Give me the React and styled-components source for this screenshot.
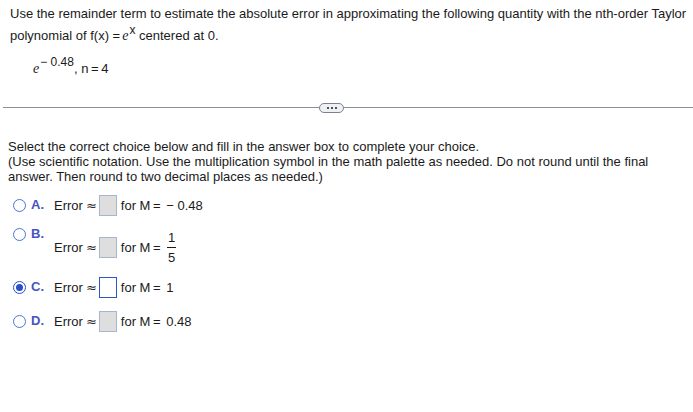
import React from "react";
import styled, { createGlobalStyle } from "styled-components";

const GlobalStyle = createGlobalStyle`
  body {
    margin: 0;
    background: #fff;
    font-family: "Liberation Sans", Arial, sans-serif;
    font-size: 13px;
    color: #1a1a1a;
  }
`;

const Page = styled.div`
  width: 693px;
  padding-top: 3px;
`;

const Question = styled.div`
  padding-left: 10px;
  line-height: 22px;
`;

const MathE = styled.span`
  font-family: "Liberation Serif", "Times New Roman", serif;
  font-style: italic;
  font-size: 14px;
  margin-left: 2px;
`;

const Sup = styled.sup`
  font-size: ${(p) => p.$size || 11}px;
  position: relative;
  top: ${(p) => p.$top || 0}px;
  margin-left: 1px;
  vertical-align: baseline;
  line-height: 0;
`;

const Expression = styled.div`
  margin-top: 11px;
  padding-left: 31px;
  line-height: 22px;
  height: 22px;
`;

const Divider = styled.div`
  display: flex;
  align-items: center;
  margin: 22px 0 0 3px;
  height: 11px;
`;

const Line = styled.div`
  flex: ${(p) => (p.$width ? `0 0 ${p.$width}px` : 1)};
  height: 1px;
  background: #8b919b;
`;

const Pill = styled.div`
  width: 23px;
  height: 8px;
  border: 1px solid #7a8190;
  border-radius: 5px;
  background: #eef0f4;
  display: flex;
  align-items: center;
  justify-content: center;
  gap: 2px;

  span {
    width: 2px;
    height: 2px;
    background: #4a505c;
  }
`;

const Instructions = styled.div`
  margin-top: 26px;
  padding-left: 8px;
  line-height: 15px;
`;

const Choices = styled.div`
  padding-left: 13px;
`;

const Choice = styled.div`
  display: flex;
  align-items: flex-start;
  margin-top: ${(p) => p.$gap}px;
`;

const RadioCell = styled.div`
  display: flex;
  align-items: center;
  height: 21px;
  width: 41px;
`;

const Radio = styled.span`
  width: 11px;
  height: 11px;
  border-radius: 50%;
  border: ${(p) => (p.$checked ? "1.5px solid #2550c8" : "1px solid #4a76d8")};
  display: flex;
  align-items: center;
  justify-content: center;
  box-sizing: content-box;

  &::after {
    content: "";
    width: 7px;
    height: 7px;
    border-radius: 50%;
    background: ${(p) => (p.$checked ? "#2550c8" : "transparent")};
  }
`;

const Letter = styled.span`
  margin-left: 5px;
  font-weight: bold;
  color: #4654be;
  position: relative;
  top: -1px;
`;

const Content = styled.div`
  display: flex;
  align-items: center;
  min-height: 21px;
  padding-top: ${(p) => p.$pad || 0}px;
`;

const Approx = styled.span`
  font-family: "DejaVu Sans", sans-serif;
  font-size: 13px;
  line-height: 15px;
  margin-left: 3px;
  color: #2a2a2a;
`;

const AnswerBox = styled.span`
  display: inline-block;
  width: 16px;
  height: 19px;
  margin: 0 4px 0 2px;
  border: 1px solid ${(p) => (p.$active ? "#2a56c6" : "#a7b6cf")};
  background: ${(p) => (p.$active ? "#fff" : "#dedede")};
`;

const Fraction = styled.span`
  display: inline-flex;
  flex-direction: column;
  align-items: center;
  margin-left: 4px;
  line-height: 15px;

  i {
    width: 9px;
    height: 1px;
    background: #1a1a1a;
    margin: 2px 0;
  }
`;

const Value = styled.span`
  margin-left: 3px;
`;

const choices = [
  { letter: "A", gap: 11, m: "−\u00a00.48" },
  { letter: "B", gap: 8, pad: 6, frac: ["1", "5"] },
  { letter: "C", gap: 12, m: "1", checked: true },
  { letter: "D", gap: 13, m: "0.48" },
];

export default function App() {
  return (
    <Page>
      <GlobalStyle />
      <Question>
        Use the remainder term to estimate the absolute error in approximating the
        following quantity with the nth-order Taylor polynomial of f(x) =
        <MathE>e</MathE>
        <Sup $size={12} $top={-6}>x</Sup> centered at 0.
      </Question>
      <Expression>
        <MathE>e</MathE>
        <Sup $size={12} $top={-7}>− 0.48</Sup>, n{"\u2009"}={"\u2009"}4
      </Expression>
      <Divider>
        <Line $width={316} />
        <Pill>
          <span />
          <span />
          <span />
        </Pill>
        <Line />
      </Divider>
      <Instructions>
        Select the correct choice below and fill in the answer box to complete your choice.
        <br />
        (Use scientific notation. Use the multiplication symbol in the math palette as
        needed. Do not round until the final answer. Then round to two decimal places as
        needed.)
      </Instructions>
      <Choices>
        {choices.map((c) => (
          <Choice key={c.letter} $gap={c.gap}>
            <RadioCell>
              <Radio $checked={c.checked} />
              <Letter>{c.letter}.</Letter>
            </RadioCell>
            <Content $pad={c.pad}>
              Error
              <Approx>≈</Approx>
              <AnswerBox $active={c.checked} />
              for M{"\u2009"}={"\u2009"}
              {c.frac ? (
                <Fraction>
                  <span>{c.frac[0]}</span>
                  <i />
                  <span>{c.frac[1]}</span>
                </Fraction>
              ) : (
                <Value>{c.m}</Value>
              )}
            </Content>
          </Choice>
        ))}
      </Choices>
    </Page>
  );
}
